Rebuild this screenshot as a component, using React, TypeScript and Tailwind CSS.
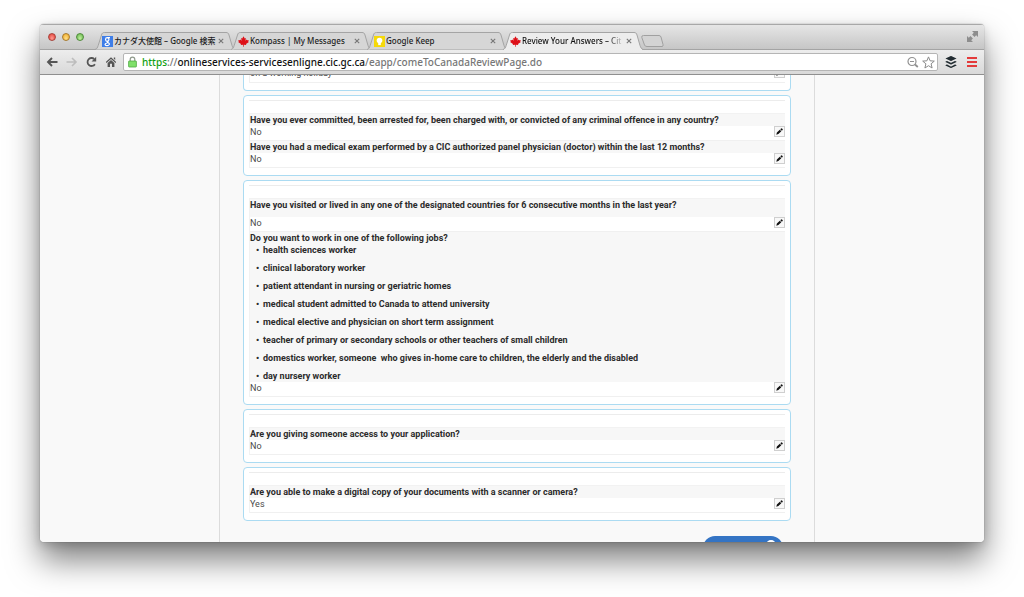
import type { ReactNode } from 'react'
import { FaBuffer } from 'react-icons/fa'

type Tab = {
  title: string
  icon: ReactNode
  active?: boolean
}

type Entry = {
  question: string
  answer: string
  jobs?: string[]
  roomy?: boolean
}

const maple = (
  <svg viewBox="0 0 22 22" className="size-[11px] shrink-0" fill="#dd1018">
    <path d="M11 .5 L13.500 4.800 L15.800 3.800 L14.800 9.500 L17.500 6.800 L18.300 8.500 L21.500 8 L20.300 11 L21.800 12.200 L16 16.200 L16.500 18 L11.700 17.400 V21.500 H10.300 V17.400 L5.500 18 L6 16.200 L.2 12.200 L1.700 11 L.5 8 L3.700 8.500 L4.500 6.800 L7.200 9.500 L6.200 3.800 L8.500 4.800 Z" />
  </svg>
)

const googleIcon = (
  <svg viewBox="0 0 22 22" className="size-[11px] shrink-0">
    <rect width="22" height="22" fill="#3f7ee8" />
    <g fill="none" stroke="#fff" strokeWidth="2.400">
      <ellipse cx="10.500" cy="7" rx="3.400" ry="3.600" />
      <path d="M10 3.200 H16 M13 10 Q9 11 11 12.500 Q15.500 14.500 14.500 17 Q13 19.500 10 19.300 Q6 19 6.200 16.500 Q6.800 14.200 11 14" />
    </g>
  </svg>
)

const keepIcon = (
  <svg viewBox="0 0 11 11" className="size-[11px] shrink-0">
    <rect width="11" height="11" fill="#f5d90a" />
    <circle cx="5.5" cy="4.5" r="2.8" fill="#fff" />
    <rect x="4.2" y="6.5" width="2.6" height="2.6" fill="#fff" />
  </svg>
)

const tabs: Tab[] = [
  { title: 'カナダ大使館 – Google 検索', icon: googleIcon },
  { title: 'Kompass | My Messages', icon: maple },
  { title: 'Google Keep', icon: keepIcon },
  { title: 'Review Your Answers – Cit', icon: maple, active: true },
]

const sections: Entry[][] = [
  [
    {
      question:
        'Have you ever committed, been arrested for, been charged with, or convicted of any criminal offence in any country?',
      answer: 'No',
    },
    {
      question: 'Have you had a medical exam performed by a CIC authorized panel physician (doctor) within the last 12 months?',
      answer: 'No',
    },
  ],
  [
    {
      question: 'Have you visited or lived in any one of the designated countries for 6 consecutive months in the last year?',
      answer: 'No',
      roomy: true,
    },
    {
      question: 'Do you want to work in one of the following jobs?',
      answer: 'No',
      jobs: [
        'health sciences worker',
        'clinical laboratory worker',
        'patient attendant in nursing or geriatric homes',
        'medical student admitted to Canada to attend university',
        'medical elective and physician on short term assignment',
        'teacher of primary or secondary schools or other teachers of small children',
        'domestics worker, someone  who gives in-home care to children, the elderly and the disabled',
        'day nursery worker',
      ],
    },
  ],
  [{ question: 'Are you giving someone access to your application?', answer: 'No' }],
  [{ question: 'Are you able to make a digital copy of your documents with a scanner or camera?', answer: 'Yes' }],
]

function BrowserTab({ title, icon, active }: Tab) {
  return (
    <div className={active ? 'relative z-10 -mr-1 h-[18px] w-[140px] shrink-0' : 'relative -mr-1 h-[18px] w-[140px] shrink-0'}>
      <svg viewBox="0 0 140 18" className="absolute top-0 left-0 h-[18px] w-[140px]">
        <path
          d="M0 17.500 C2 17 2.500 15.500 3.200 13.500 L6.500 3 C7 1 8 .5 9.500 .5 H131 C132.500 .5 133.500 1 134 3 L137 13.500 C137.700 15.500 138.500 17 140 17.500"
          fill={active ? '#ededed' : '#d6d6d6'}
          stroke="#a4a4a4"
          strokeWidth="1"
        />
        {active && <rect x="1" y="17" width="138" height="1" fill="#ededed" />}
      </svg>
      <div className="relative flex h-[18px] items-center gap-px pr-[11px] pl-[7px]">
        {icon}
        <span
          className={
            active
              ? 'w-[102px] overflow-hidden whitespace-nowrap text-[#111] [mask-image:linear-gradient(to_right,black_84%,transparent)]'
              : 'w-[102px] overflow-hidden whitespace-nowrap'
          }
        >
          {title}
        </span>
        <button aria-label="Close tab" className="ml-auto">
          <svg viewBox="0 0 6 6" className="size-[6px]" stroke="#777" strokeWidth="1.1">
            <path d="M.8 .8 L5.200 5.200 M5.200 .8 L.8 5.200" />
          </svg>
        </button>
      </div>
    </div>
  )
}

function TitleBar() {
  return (
    <div className="flex h-[26px] items-end border-t border-b border-t-[#a8a8a8] border-b-[#a4a4a4] bg-linear-to-b from-[#e6e6e6] to-[#c6c6c6] font-['Noto_Sans','Noto_Sans_CJK_JP',sans-serif] text-[8px] leading-[12px] font-medium text-[#1c1c1c]">
      <div className="flex gap-[6px] self-center pr-[7px] pl-2">
        <button aria-label="Close" className="size-2 rounded-full border border-[#a8433c] bg-radial-[at_50%_75%] from-[#ff9d94] to-[#e0352c]" />
        <button aria-label="Minimize" className="size-2 rounded-full border border-[#a87a2c] bg-radial-[at_50%_75%] from-[#ffe08a] to-[#eea51c]" />
        <button aria-label="Zoom" className="size-2 rounded-full border border-[#4f8b3a] bg-radial-[at_50%_75%] from-[#c4f0a0] to-[#5fb446]" />
      </div>
      <div className="-mb-px ml-1 flex items-start">
        {tabs.map((t) => (
          <BrowserTab key={t.title} {...t} />
        ))}
        <button aria-label="New tab" className="mt-[3px] ml-[2px]">
          <svg viewBox="0 0 23 12" className="h-3 w-[23px]" fill="#d3d3d3" stroke="#a0a0a0">
            <path d="M2.500 .5 H18 Q19.500 .5 20 2 L22 9.500 Q22.500 11.500 21 11.500 H6 Q4 11.500 3.500 10 L.8 2.500 Q.3 .5 2.500 .5 Z" />
          </svg>
        </button>
      </div>
      <button aria-label="Full screen" className="mr-[6px] ml-auto self-center pb-[2px]">
        <svg viewBox="0 0 11 11" className="size-[11px]" fill="#8d8d8d">
          <path d="M5 0 H11 V6 L9.200 4.200 L7.500 5.900 L5.100 3.500 L6.800 1.800 Z" />
          <path d="M0 5 L1.800 6.800 L3.500 5.100 L5.900 7.500 L4.200 9.200 L6 11 H0 Z" />
        </svg>
      </button>
    </div>
  )
}

function Toolbar() {
  return (
    <div className="flex h-[25px] items-center border-b border-[#8f8f8f] bg-linear-to-b from-[#ededed] to-[#d9d9d9]">
      <div className="flex w-[83px] shrink-0 items-center gap-2 pl-[6px]">
        <button aria-label="Back">
          <svg viewBox="0 0 12 12" className="size-3" fill="none" stroke="#555" strokeWidth="1.900">
            <path d="M11.500 6 H2 M6 2 L2 6 L6 10" />
          </svg>
        </button>
        <button aria-label="Forward" disabled>
          <svg viewBox="0 0 12 12" className="size-3" fill="none" stroke="#bdbdbd" strokeWidth="1.600">
            <path d="M.5 6 H10 M6 2 L10 6 L6 10" />
          </svg>
        </button>
        <button aria-label="Reload">
          <svg viewBox="0 0 12 12" className="size-3" fill="none" stroke="#555" strokeWidth="1.800">
            <path d="M8.900 8.200 A4 4 0 1 1 8.200 3" />
            <path d="M10.200 .8 V5.400 H5.600 Z" fill="#555" stroke="none" />
          </svg>
        </button>
        <button aria-label="Home">
          <svg viewBox="0 0 12 12" className="size-3" fill="#555">
            <path d="M5 1.200 L10.200 6 L9.500 6.900 L5 2.900 L.5 6.900 L-.2 6 Z M7.800 1.500 H9.200 V4 L7.800 2.700 Z" />
            <path d="M1.600 6.900 L5 3.900 L8.400 6.900 V11 H6 V7.800 H4 V11 H1.600 Z" />
          </svg>
        </button>
      </div>
      <div className="flex h-[18px] min-w-0 flex-1 items-center rounded-[2px] border border-[#b5b5b5] bg-white pr-[2px] pl-1">
        <svg viewBox="0 0 9 12" className="h-3 w-[9px] shrink-0">
          <path d="M2.200 6 V3.500 A2.300 2.300 0 0 1 6.800 3.500 V6" fill="none" stroke="#8f9a8c" strokeWidth="1.200" />
          <rect x=".6" y="5" width="7.800" height="6" rx=".6" fill="#7fe06a" stroke="#4fa843" strokeWidth=".8" />
        </svg>
        <div className="ml-[5px] flex-1 truncate font-['Noto_Sans',sans-serif] text-[10px] leading-[14px] font-medium text-[#777]">
          <span className="text-[#12a012]">https</span>://<span className="text-[#111]">onlineservices-servicesenligne.cic.gc.ca</span>
          /eapp/comeToCanadaReviewPage.do
        </div>
        <button aria-label="Zoom level" className="mr-[3px]">
          <svg viewBox="0 0 12 12" className="size-3" fill="none" stroke="#919191" strokeWidth="1.200">
            <circle cx="5" cy="5.500" r="4" />
            <path d="M3 5.500 H7" />
            <path d="M8 8.500 L10.800 11" strokeWidth="1.800" />
          </svg>
        </button>
        <button aria-label="Bookmark this page">
          <svg viewBox="0 0 13 13" className="size-[13px]" fill="#fff" stroke="#8a8a8a">
            <path d="M6.500 .9 L8.100 4.800 L12.300 5.100 L9.100 7.800 L10.100 12 L6.500 9.700 L2.900 12 L3.900 7.800 L.7 5.100 L4.900 4.800 Z" />
          </svg>
        </button>
      </div>
      <button aria-label="Buffer" className="ml-[6px]">
        <FaBuffer className="size-[14px] text-[#222c31]" />
      </button>
      <button aria-label="Menu" className="mr-[7px] ml-[9px] flex w-[10px] flex-col gap-[2px]">
        <span className="h-[2px] bg-[#e33a3a]" />
        <span className="h-[2px] bg-[#e33a3a]" />
        <span className="h-[2px] bg-[#e33a3a]" />
      </button>
    </div>
  )
}

function EditButton() {
  return (
    <button aria-label="Edit answer" className="flex size-[11px] shrink-0 items-center justify-center border border-[#cfcfcf] bg-[#f8f8f8]">
      <svg viewBox="0 0 7 7" className="size-[7px]" fill="#111">
        <path d="M.3 6.700 L.9 4.600 L3.800 1.700 L5.300 3.200 L2.400 6.100 Z M4.300 1.200 L5.100 .4 Q5.500 0 5.900 .4 L6.600 1.100 Q7 1.500 6.600 1.900 L5.800 2.700 Z" />
      </svg>
    </button>
  )
}

function Row({ question, answer, jobs, roomy }: Entry) {
  return (
    <div>
      <dt className={roomy ? 'bg-[#f7f7f7] pb-[6px] font-bold text-[#2b2b2b]' : 'bg-[#f7f7f7] font-bold text-[#2b2b2b]'}>
        {question}
        {jobs && (
          <ul className="flex flex-col gap-[6px]">
            {jobs.map((job) => (
              <li key={job} className="flex whitespace-pre">
                <span className="w-[13px] pl-[6px]">•</span>
                {job}
              </li>
            ))}
          </ul>
        )}
      </dt>
      <dd className="flex h-[15px] justify-between border-b border-[#f0f0f0] bg-white text-[#4a4a4a]">
        {answer}
        <EditButton />
      </dd>
    </div>
  )
}

function Card({ entries }: { entries: Entry[] }) {
  return (
    <section className="rounded-[4px] border border-[#abdbf2] bg-white px-[5px] pt-1 pb-[7px]">
      <hr className="mb-3 border-[#ececec]" />
      <dl className="border-t border-l border-[#f2f2f2]">
        {entries.map((e) => (
          <Row key={e.question} {...e} />
        ))}
      </dl>
    </section>
  )
}

export default function App() {
  return (
    <div className="flex h-screen flex-col bg-white px-10 pt-6 pb-[55px]">
      <div className="flex min-h-0 flex-1 flex-col overflow-hidden rounded-[4px] shadow-[0_0_1px_rgba(0,0,0,0.6),0_3px_10px_rgba(0,0,0,0.15),0_18px_32px_rgba(0,0,0,0.5)]">
        <TitleBar />
        <Toolbar />
        <main className="flex min-h-0 flex-1 justify-center overflow-hidden bg-[#f9f9f9] pl-[10px] font-[Roboto,'Liberation_Sans',sans-serif] text-[9px] leading-[12px]">
          <div className="flex h-max min-h-full w-[596px] flex-col gap-1 border-x border-[#dcdcdc] px-[23px]">
            <section className="-mt-2 rounded-b-[4px] border border-t-0 border-[#abdbf2] bg-white px-[5px] pb-[7px]">
              <div className="flex h-4 justify-between border-b border-l border-[#f0f0f0] text-[#4a4a4a]">
                on a working holiday
                <EditButton />
              </div>
            </section>
            {sections.map((entries) => (
              <Card key={entries[0].question} entries={entries} />
            ))}
            <button
              aria-label="Next"
              className="mt-[11px] mr-2 flex h-6 w-[80px] items-start justify-end self-end rounded-[12px] bg-[#3474c4] pt-1 pr-[7px]"
            >
              <span className="size-[10px] rounded-full bg-white" />
            </button>
          </div>
        </main>
      </div>
    </div>
  )
}
